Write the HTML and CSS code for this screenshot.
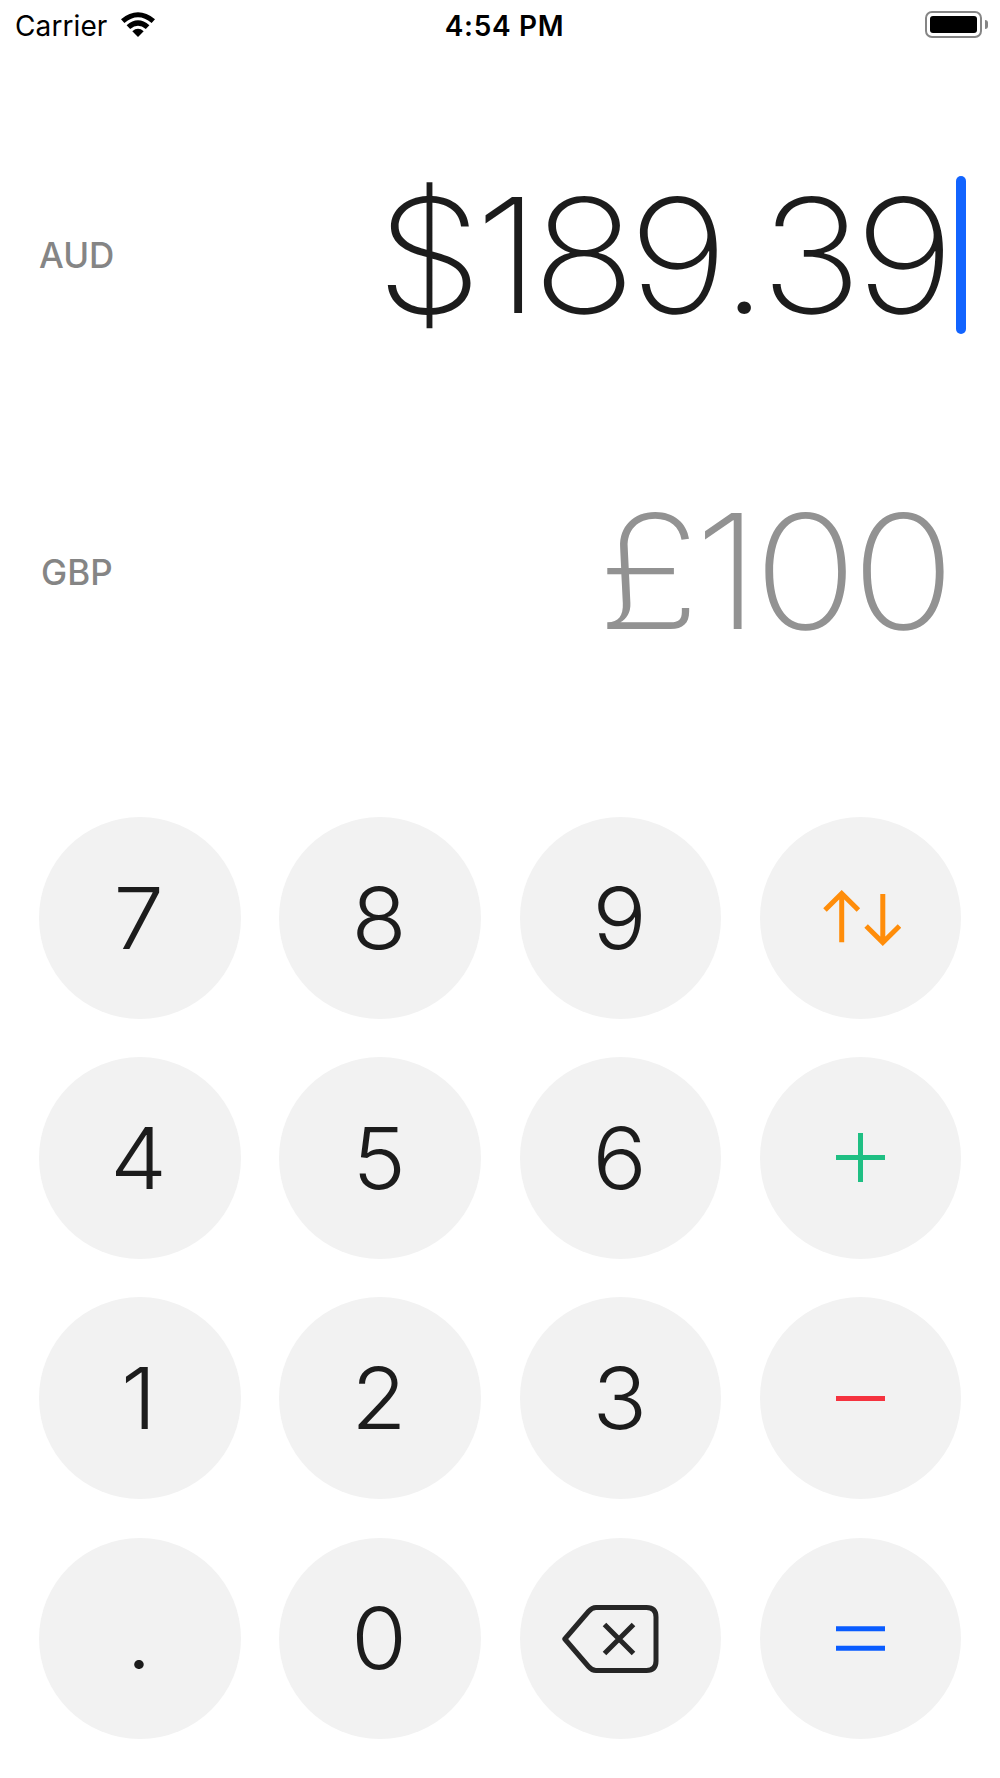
FILE: index.html
```
<!DOCTYPE html>
<html lang="en">

<head>
    <meta charset="UTF-8">
    <meta name="viewport" content="width=device-width, initial-scale=1.0">
    <link rel="stylesheet" href="styles.css">
    <title>Currency Converter</title>
</head>

<body>

    <header class="status-bar">
        <div class="carrier">
            <span>Carrier</span>
            <svg class="wifi" width="34" height="25" viewBox="0 0 34 25">
                <path d="M0 7.2 Q17 -6.6 34 7.2 L30.6 11 Q17 -0.4 3.4 11 Z" />
                <path d="M5.6 13.2 Q17 3.4 28.4 13.2 L24.8 17 Q17 10.4 9.2 17 Z" />
                <path d="M11.3 19.2 Q17 14.4 22.7 19.2 L17 25 Z" />
            </svg>
        </div>
        <div class="time">4:54 PM</div>
        <div class="battery">
            <div class="battery-case">
                <div class="battery-level"></div>
            </div>
            <div class="battery-tip"></div>
        </div>
    </header>

    <main>
        <section class="display">
            <div class="row active">
                <span class="currency">AUD</span>
                <span class="amount">$189.39</span>
                <span class="cursor"></span>
            </div>
            <div class="row inactive">
                <span class="currency">GBP</span>
                <span class="amount">£100</span>
            </div>
        </section>

        <section class="keypad">
            <button type="button" class="key"><span class="digit">7</span></button>
            <button type="button" class="key"><span class="digit">8</span></button>
            <button type="button" class="key"><span class="digit">9</span></button>
            <button type="button" class="key swap" aria-label="Swap">
                <svg width="80" height="56" viewBox="0 0 80 56">
                    <path d="M20.7 52.3 V4 M4 20 L20.7 3.5 L37.4 20" />
                    <path d="M61.8 4 V52 M45.1 36 L61.8 52.5 L78.5 36" />
                </svg>
            </button>

            <button type="button" class="key"><span class="digit">4</span></button>
            <button type="button" class="key"><span class="digit">5</span></button>
            <button type="button" class="key"><span class="digit">6</span></button>
            <button type="button" class="key plus" aria-label="Plus">
                <svg width="49" height="49" viewBox="0 0 49 49">
                    <path d="M0 24.5 H49 M24.5 0 V49" />
                </svg>
            </button>

            <button type="button" class="key"><span class="digit">1</span></button>
            <button type="button" class="key"><span class="digit">2</span></button>
            <button type="button" class="key"><span class="digit">3</span></button>
            <button type="button" class="key minus" aria-label="Minus">
                <svg width="49" height="49" viewBox="0 0 49 49">
                    <path d="M0 24.5 H49" />
                </svg>
            </button>

            <button type="button" class="key"><span class="digit">.</span></button>
            <button type="button" class="key"><span class="digit">0</span></button>
            <button type="button" class="key delete" aria-label="Delete">
                <svg width="98" height="70" viewBox="0 0 98 70">
                    <path class="outline" d="M2.8 35 L26.5 7.5 Q30 3.5 34 3.5 H84.5 Q94 3.5 94 13 V57 Q94 66.5 84.5 66.5 H34 Q30 66.5 26.5 62.5 Z" />
                    <path d="M42.5 20.5 L71.5 49.5 M71.5 20.5 L42.5 49.5" />
                </svg>
            </button>
            <button type="button" class="key equals" aria-label="Equals">
                <svg width="49" height="49" viewBox="0 0 49 49">
                    <path d="M0 14.8 H49 M0 34.2 H49" />
                </svg>
            </button>
        </section>
    </main>

</body>

</html>
```
FILE: styles.css
```
* {
    box-sizing: border-box;
}

body {
    margin: 0;
    height: 1778px;
    background: #fff;
    color: #1c1c1c;
    font-family: Inter, "Liberation Sans", sans-serif;
}

.status-bar {
    display: grid;
    grid-template-columns: 1fr auto 1fr;
    align-items: center;
    height: 50px;
    padding: 0 12px 0 15px;
    color: #000;
    font-size: 28px;
}

.carrier {
    display: flex;
    align-items: center;
    gap: 14px;
    padding-top: 1px;
    letter-spacing: 0.1px;
}

.wifi {
    margin-bottom: 3px;
}

.time {
    font-weight: 600;
    letter-spacing: 0.7px;
    padding: 1px 0 0 6px;
}

.battery {
    display: flex;
    align-items: center;
    justify-content: flex-end;
    gap: 3px;
    padding-bottom: 2px;
}

.battery-case {
    width: 57px;
    height: 27px;
    padding: 3px;
    border: 2px solid #858585;
    border-radius: 7px;
}

.battery-level {
    height: 100%;
    border-radius: 3px;
    background: #000;
}

.battery-tip {
    width: 3px;
    height: 9px;
    border-radius: 0 4px 4px 0;
    background: #858585;
}

.display {
    padding: 47px 34px 0 39px;
}

.row {
    display: flex;
    align-items: center;
    height: 316px;
}

.currency {
    flex: 1;
    font-size: 35px;
    font-weight: 450;
    color: #858585;
}

.inactive .currency {
    padding: 1px 0 0 2px;
}

/* wide, tightly set digits */
.amount {
    margin-right: 5px;
    font-size: 159px;
    font-weight: 200;
    font-kerning: none;
    line-height: 1;
    letter-spacing: -7.2px;
    transform: scaleX(1.08);
    transform-origin: right;
}

.cursor {
    width: 10px;
    height: 158px;
    margin-left: 4px;
    border-radius: 5px;
    background: #1264ff;
}

.inactive {
    padding-right: 14px;
}

.inactive .amount {
    margin-right: 3px;
    letter-spacing: -5.5px;
    color: #929292;
}

.keypad {
    display: grid;
    grid-template-columns: repeat(4, 201.5px);
    gap: 38.7px 38.8px;
    padding: 88px 39px 0;
}

.key {
    display: flex;
    align-items: center;
    justify-content: center;
    height: 201.5px;
    padding: 0;
    border: none;
    border-radius: 50%;
    background: #f2f2f2;
    color: #1c1c1c;
    font-family: inherit;
    font-size: 85px;
    font-weight: 300;
}

.digit {
    padding: 1px 2px 0 0;
    transform: scaleX(1.06);
}

.key svg {
    fill: none;
    stroke: currentColor;
    stroke-width: 5;
}

.delete {
    padding: 2px 18px 0 0;
}

.delete svg {
    color: #262626;
}

.outline {
    stroke-linejoin: round;
}

.swap {
    color: #ff8d0a;
}

.plus {
    color: #1fbf83;
}

.minus {
    color: #f5333f;
}

.equals {
    color: #0a5cff;
}
```
